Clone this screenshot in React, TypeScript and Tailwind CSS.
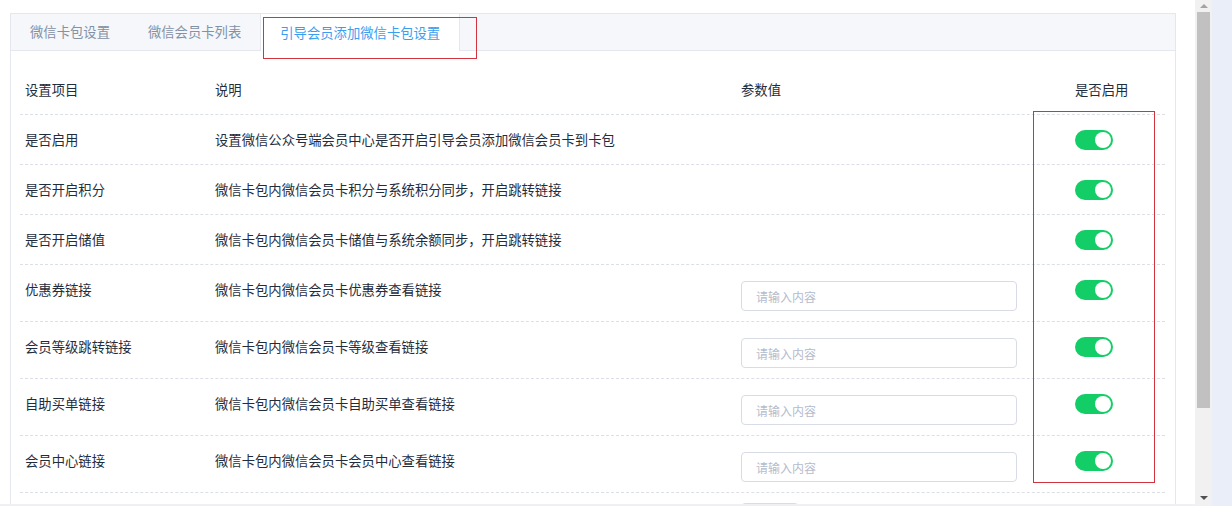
import { useState } from "react"

interface SettingRow {
    name: string
    desc: string
    hasInput: boolean
}

const rows: SettingRow[] = [
    { name: "是否启用", desc: "设置微信公众号端会员中心是否开启引导会员添加微信会员卡到卡包", hasInput: false },
    { name: "是否开启积分", desc: "微信卡包内微信会员卡积分与系统积分同步，开启跳转链接", hasInput: false },
    { name: "是否开启储值", desc: "微信卡包内微信会员卡储值与系统余额同步，开启跳转链接", hasInput: false },
    { name: "优惠券链接", desc: "微信卡包内微信会员卡优惠券查看链接", hasInput: true },
    { name: "会员等级跳转链接", desc: "微信卡包内微信会员卡等级查看链接", hasInput: true },
    { name: "自助买单链接", desc: "微信卡包内微信会员卡自助买单查看链接", hasInput: true },
    { name: "会员中心链接", desc: "微信卡包内微信会员卡会员中心查看链接", hasInput: true },
]

const tabs = ["微信卡包设置", "微信会员卡列表", "引导会员添加微信卡包设置"]

function Switch({ on, onToggle }: { on: boolean; onToggle: () => void }) {
    return (
        <button
            type="button"
            onClick={onToggle}
            className={`relative w-[38px] h-[20px] rounded-full ${on ? "bg-[#13ce66]" : "bg-[#bfcbd9]"}`}
        >
            <span
                className={`absolute top-[2px] w-[16px] h-[16px] rounded-full bg-white ${on ? "right-[2px]" : "left-[2px]"}`}
            />
        </button>
    )
}

export default function App() {
    const [active, setActive] = useState(2)
    const [enabled, setEnabled] = useState<boolean[]>(rows.map(() => true))

    const toggle = (index: number) => {
        setEnabled(prev => prev.map((v, i) => (i === index ? !v : v)))
    }

    return (
        <div
            className="relative flex w-[1232px] h-[506px] overflow-hidden bg-white text-[13.33px] text-[#1f2d3d]"
            style={{ fontFamily: '"Noto Sans CJK SC", "Noto Sans", sans-serif' }}
        >
            {/* main page */}
            <div className="flex flex-col w-[1195px]">
                <div className="h-[504px] overflow-hidden pl-[10px] pt-[13px]">
                    <div className="w-[1166px] h-[520px] border border-[#e4e7ed] bg-white">
                        {/* tab header */}
                        <div className="flex h-[37px] bg-[#f5f7fa] border-b border-[#e4e7ed]">
                            {tabs.map((tab, index) => (
                                <button
                                    key={tab}
                                    type="button"
                                    onClick={() => setActive(index)}
                                    className={
                                        index === active
                                            ? "h-[37px] px-[19px] bg-white border-x border-[#e4e7ed] text-[#3a9ef0] leading-[36px]"
                                            : "h-[36px] px-[19px] text-[#8391a5] leading-[36px]"
                                    }
                                >
                                    {tab}
                                </button>
                            ))}
                        </div>

                        {/* table */}
                        <div className="pt-[14px] pl-[9px] pr-[10px]">
                            <div className="flex border-b border-dashed border-[#dcdfe6]">
                                <div className="w-[190px] h-[49px] pl-[5px] flex items-center">设置项目</div>
                                <div className="w-[526px] h-[49px] pl-[5px] flex items-center">说明</div>
                                <div className="w-[334px] h-[49px] pl-[5px] flex items-center">参数值</div>
                                <div className="flex-1 h-[49px] pl-[5px] flex items-center">是否启用</div>
                            </div>

                            {rows.map((row, index) => (
                                <div key={row.name} className="flex items-start border-b border-dashed border-[#dcdfe6]">
                                    <div className="w-[190px] h-[49px] pl-[5px] flex items-center">{row.name}</div>
                                    <div className="w-[526px] h-[49px] pl-[5px] flex items-center">{row.desc}</div>
                                    <div className="w-[334px] pl-[5px]">
                                        {row.hasInput ? (
                                            <div className="pt-[16px] pb-[10px]">
                                                <input
                                                    placeholder="请输入内容"
                                                    className="w-[276px] h-[30px] rounded-[4px] border border-[#d8dce5] pl-[14px] text-[12px] outline-none placeholder:text-[#b4bccc]"
                                                />
                                            </div>
                                        ) : (
                                            <div className="h-[49px]" />
                                        )}
                                    </div>
                                    <div className="flex-1 h-[49px] pl-[5px] flex items-center">
                                        <Switch on={enabled[index]} onToggle={() => toggle(index)} />
                                    </div>
                                </div>
                            ))}

                            {/* next row, cut off */}
                            <div className="flex">
                                <div className="w-[190px]" />
                                <div className="w-[526px]" />
                                <div className="w-[334px] pl-[5px] pt-[10px]">
                                    <div className="w-[58px] h-[30px] rounded-[4px] border border-[#d8dce5]" />
                                </div>
                            </div>
                        </div>
                    </div>
                </div>
                <div className="h-[2px] bg-[#eef0f3]" />
            </div>

            {/* scrollbar */}
            <div className="flex flex-col items-center w-[17px] h-full bg-[#f1f1f1]">
                <div className="h-[12px] flex items-center justify-center">
                    <div className="w-0 h-0 border-x-[4px] border-x-transparent border-b-[4px] border-b-[#a3a3a3]" />
                </div>
                <div className="w-[13px] h-[396px] bg-[#c1c1c1]" />
                <div className="flex-1" />
                <div className="h-[16px] flex items-center justify-center">
                    <div className="w-0 h-0 border-x-[4px] border-x-transparent border-t-[4px] border-t-[#505050]" />
                </div>
            </div>
            <div className="w-[20px] h-full bg-[#e9eef8]" />

            {/* annotation boxes */}
            <div className="absolute left-[263px] top-[17px] w-[214px] h-[42px] border border-[#d2343f]" />
            <div className="absolute left-[1033px] top-[111px] w-[122px] h-[372px] border border-[#d2343f]" />
        </div>
    )
}
